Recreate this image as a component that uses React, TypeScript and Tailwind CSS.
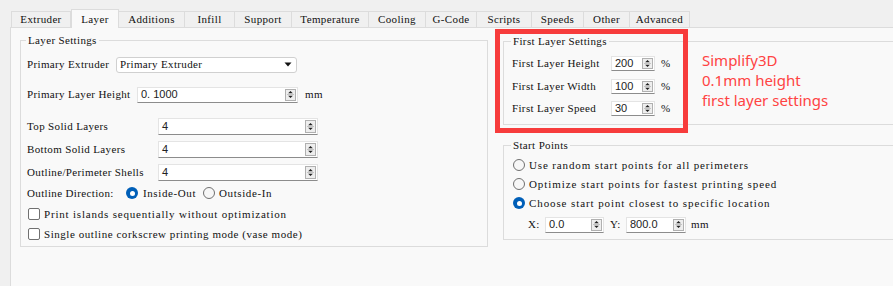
import React from 'react';

const tabs = [
  { name: 'Extruder', w: 'w-[60px]' },
  { name: 'Layer', w: 'w-[48px]', active: true },
  { name: 'Additions', w: 'w-[67px]' },
  { name: 'Infill', w: 'w-[51px]' },
  { name: 'Support', w: 'w-[58px]' },
  { name: 'Temperature', w: 'w-[78px]' },
  { name: 'Cooling', w: 'w-[58px]' },
  { name: 'G-Code', w: 'w-[52px]' },
  { name: 'Scripts', w: 'w-[56px]' },
  { name: 'Speeds', w: 'w-[53px]' },
  { name: 'Other', w: 'w-[47px]' },
  { name: 'Advanced', w: 'w-[61px]' },
];

const SpinArrows = () => (
  <div className="flex w-[11px] self-stretch my-[1px] items-center justify-center border border-[#b0b0b0] bg-[#eeeeee]">
    <svg width="9" height="11" viewBox="0 0 9 11">
      <path d="M4.5 2L6.8 4.3H2.2Z" fill="#1f1f1f" />
      <line x1="1" y1="5.5" x2="8" y2="5.5" stroke="#c4c4c4" strokeWidth="1" />
      <path d="M2.2 6.7H6.8L4.5 9Z" fill="#1f1f1f" />
    </svg>
  </div>
);

const Spin = ({ value, className }: { value: string; className: string }) => (
  <div
    className={`flex items-center justify-between bg-white border border-[#e4e4e4] border-b-[#8c8c8c] pl-[3px] pr-[1px] ${className}`}
  >
    <span className="font-['Liberation_Sans',sans-serif] text-[11px] leading-none tracking-normal text-[#222]">{value}</span>
    <SpinArrows />
  </div>
);

const Radio = ({ checked }: { checked?: boolean }) =>
  checked ? (
    <span className="flex h-[12px] w-[12px] shrink-0 items-center justify-center rounded-full bg-[#005fb8]">
      <span className="h-[5px] w-[5px] rounded-full bg-white" />
    </span>
  ) : (
    <span className="h-[12px] w-[12px] shrink-0 rounded-full border border-[#707070] bg-[#f7f7f7]" />
  );

const Checkbox = () => (
  <span className="h-[12px] w-[12px] shrink-0 rounded-[2px] border border-[#707070] bg-white" />
);

export default function App() {
  return (
    <div className="relative flex h-[286px] w-[893px] flex-col overflow-hidden bg-[#f0f0f0] font-['Liberation_Serif',serif] text-[11px] tracking-[0.35px] text-[#111]">
      {/* tab strip */}
      <div className="flex h-[27px] items-end pl-[11px]">
        {tabs.map((t) =>
          t.active ? (
            <div
              key={t.name}
              className={`relative z-10 -mb-px flex h-[19px] items-center justify-center border-x border-t border-[#dcdcdc] bg-[#f9f9f9] ${t.w}`}
            >
              {t.name}
            </div>
          ) : (
            <div
              key={t.name}
              className={`-ml-px flex h-[16px] items-center justify-center border border-b-0 border-[#dcdcdc] bg-[#f0f0f0] first:ml-0 ${t.w}`}
            >
              {t.name}
            </div>
          ),
        )}
      </div>

      {/* tab page */}
      <div className="ml-[10px] flex flex-1 border-l border-t border-[#dcdcdc] bg-[#f9f9f9]">
        {/* Layer Settings */}
        <fieldset className="ml-[9px] mt-[5px] h-[214px] w-[468px] shrink-0 border border-[#dcdcdc] pl-[6px] pb-[4px]">
          <legend className="-ml-[1px] px-[2px] leading-[14px]">Layer Settings</legend>
          <div className="flex flex-col">
            <div className="mt-[10px] flex h-[15px] items-center">
              <span className="w-[89px]">Primary Extruder</span>
              <div className="flex h-[16px] w-[181px] items-center justify-between rounded-[3px] border border-[#d0d0d0] bg-white pl-[3px] pr-[4px]">
                <span>Primary Extruder</span>
                <svg width="8" height="5" viewBox="0 0 8 5">
                  <path d="M0.5 0.5H7.5L4 4.5Z" fill="#111" />
                </svg>
              </div>
            </div>
            <div className="mt-[15px] flex h-[15px] items-center">
              <span className="w-[110px]">Primary Layer Height</span>
              <Spin value="0. 1000" className="h-[16px] w-[161px]" />
              <span className="ml-[7px]">mm</span>
            </div>
            <div className="mt-[16px] flex h-[16px] items-center">
              <span className="w-[131px]">Top Solid Layers</span>
              <Spin value="4" className="h-[17px] w-[160px]" />
            </div>
            <div className="mt-[7px] flex h-[16px] items-center">
              <span className="w-[131px]">Bottom Solid Layers</span>
              <Spin value="4" className="h-[17px] w-[160px]" />
            </div>
            <div className="mt-[7px] flex h-[16px] items-center">
              <span className="w-[131px]">Outline/Perimeter Shells</span>
              <Spin value="4" className="h-[17px] w-[160px]" />
            </div>
            <div className="mt-[5px] flex h-[16px] items-center">
              <span className="w-[99px]">Outline Direction:</span>
              <Radio checked />
              <span className="ml-[5px] w-[60px] tracking-[0.6px]">Inside-Out</span>
              <Radio />
              <span className="ml-[4px] tracking-[0.6px]">Outside-In</span>
            </div>
            <div className="mt-[5px] flex h-[16px] items-center pl-[1px]">
              <Checkbox />
              <span className="ml-[4px] tracking-[0.8px]">Print islands sequentially without optimization</span>
            </div>
            <div className="mt-[4px] flex h-[16px] items-center pl-[1px]">
              <Checkbox />
              <span className="ml-[4px] tracking-[0.55px]">Single outline corkscrew printing mode (vase mode)</span>
            </div>
          </div>
        </fieldset>

        {/* right column */}
        <div className="ml-[15px] flex w-[400px] shrink-0 flex-col">
          <fieldset className="mt-[6px] h-[91px] border border-[#dcdcdc] pl-[8px]">
            <legend className="-ml-[1px] px-[2px] leading-[14px]">First Layer Settings</legend>
            <div className="flex">
              <div className="flex w-[190px] shrink-0 flex-col">
                <div className="mt-[8px] flex h-[14px] items-center">
                  <span className="w-[99px]">First Layer Height</span>
                  <Spin value="200" className="h-[15px] w-[44px]" />
                  <span className="ml-[6px]">%</span>
                </div>
                <div className="mt-[9px] flex h-[14px] items-center">
                  <span className="w-[99px]">First Layer Width</span>
                  <Spin value="100" className="h-[15px] w-[44px]" />
                  <span className="ml-[6px]">%</span>
                </div>
                <div className="mt-[8px] flex h-[14px] items-center">
                  <span className="w-[99px]">First Layer Speed</span>
                  <Spin value="30" className="h-[15px] w-[44px]" />
                  <span className="ml-[6px]">%</span>
                </div>
              </div>
              <div className="mt-[2px] font-['Noto_Sans',sans-serif] text-[15px] leading-[20px] tracking-normal text-[#ff4343]">
                <div>Simplify3D</div>
                <div>0.1mm height</div>
                <div>first layer settings</div>
              </div>
            </div>
          </fieldset>

          <fieldset className="mt-[13px] h-[102px] border border-[#dcdcdc] pl-[8px] pb-[7px]">
            <legend className="-ml-[1px] px-[2px] leading-[14px]">Start Points</legend>
            <div className="flex flex-col">
              <div className="mt-[5px] flex h-[16px] items-center pl-[1px]">
                <Radio />
                <span className="ml-[4px] tracking-[0.87px]">Use random start points for all perimeters</span>
              </div>
              <div className="mt-[3px] flex h-[16px] items-center pl-[1px]">
                <Radio />
                <span className="ml-[4px] tracking-[0.92px]">Optimize start points for fastest printing speed</span>
              </div>
              <div className="mt-[3px] flex h-[16px] items-center pl-[1px]">
                <Radio checked />
                <span className="ml-[4px] tracking-[0.9px]">Choose start point closest to specific location</span>
              </div>
              <div className="mt-[6px] flex h-[15px] items-center pl-[16px]">
                <span className="w-[17px]">X:</span>
                <Spin value="0.0" className="h-[16px] w-[59px]" />
                <span className="ml-[6px] w-[16px]">Y:</span>
                <Spin value="800.0" className="h-[16px] w-[60px]" />
                <span className="ml-[5px]">mm</span>
              </div>
            </div>
          </fieldset>
        </div>
      </div>

      {/* annotation frame drawn over the first layer group */}
      <div className="pointer-events-none absolute left-[495px] top-[29px] h-[104px] w-[193px] border-[5px] border-[#f73c3c]" />
    </div>
  );
}
